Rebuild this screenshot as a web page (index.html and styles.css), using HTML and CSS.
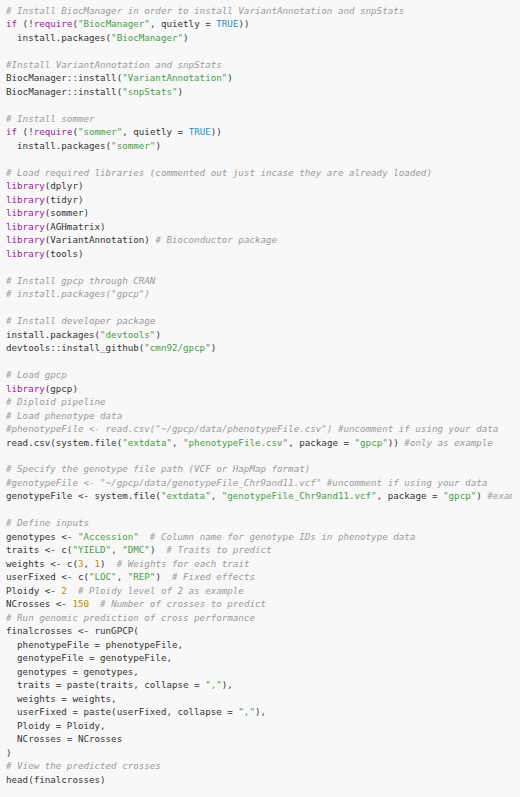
FILE: index.html
```html
<!DOCTYPE html>
<html>
<head>
<meta charset="utf-8">
<link rel="stylesheet" href="styles.css">
</head>
<body>
<pre class="code"><span class="c"># Install BiocManager in order to install VariantAnnotation and snpStats</span>
<span class="k">if</span> (!<span class="k">require</span>(<span class="s">"BiocManager"</span>, quietly = <span class="b">TRUE</span>))
  install.packages(<span class="s">"BiocManager"</span>)

<span class="c">#Install VariantAnnotation and snpStats</span>
BiocManager::install(<span class="s">"VariantAnnotation"</span>)
BiocManager::install(<span class="s">"snpStats"</span>)

<span class="c"># Install sommer</span>
<span class="k">if</span> (!<span class="k">require</span>(<span class="s">"sommer"</span>, quietly = <span class="b">TRUE</span>))
  install.packages(<span class="s">"sommer"</span>)

<span class="c"># Load required libraries (commented out just incase they are already loaded)</span>
<span class="k">library</span>(dplyr)
<span class="k">library</span>(tidyr)
<span class="k">library</span>(sommer)
<span class="k">library</span>(AGHmatrix)
<span class="k">library</span>(VariantAnnotation) <span class="c"># Bioconductor package</span>
<span class="k">library</span>(tools)

<span class="c"># Install gpcp through CRAN</span>
<span class="c"># install.packages("gpcp")</span>

<span class="c"># Install developer package</span>
install.packages(<span class="s">"devtools"</span>)
devtools::install_github(<span class="s">"cmn92/gpcp"</span>)

<span class="c"># Load gpcp</span>
<span class="k">library</span>(gpcp)
<span class="c"># Diploid pipeline</span>
<span class="c"># Load phenotype data</span>
<span class="c">#phenotypeFile &lt;- read.csv("~/gpcp/data/phenotypeFile.csv") #uncomment if using your data</span>
read.csv(system.file(<span class="s">"extdata"</span>, <span class="s">"phenotypeFile.csv"</span>, package = <span class="s">"gpcp"</span>)) <span class="c">#only as example</span>

<span class="c"># Specify the genotype file path (VCF or HapMap format)</span>
<span class="c">#genotypeFile &lt;- "~/gpcp/data/genotypeFile_Chr9and11.vcf" #uncomment if using your data</span>
genotypeFile &lt;- system.file(<span class="s">"extdata"</span>, <span class="s">"genotypeFile_Chr9and11.vcf"</span>, package = <span class="s">"gpcp"</span>) <span class="c">#example</span>

<span class="c"># Define inputs</span>
genotypes &lt;- <span class="s">"Accession"</span>  <span class="c"># Column name for genotype IDs in phenotype data</span>
traits &lt;- c(<span class="s">"YIELD"</span>, <span class="s">"DMC"</span>)  <span class="c"># Traits to predict</span>
weights &lt;- c(<span class="n">3</span>, <span class="n">1</span>)  <span class="c"># Weights for each trait</span>
userFixed &lt;- c(<span class="s">"LOC"</span>, <span class="s">"REP"</span>)  <span class="c"># Fixed effects</span>
Ploidy &lt;- <span class="n">2</span>  <span class="c"># Ploidy level of 2 as example</span>
NCrosses &lt;- <span class="n">150</span>  <span class="c"># Number of crosses to predict</span>
<span class="c"># Run genomic prediction of cross performance</span>
finalcrosses &lt;- runGPCP(
  phenotypeFile = phenotypeFile,
  genotypeFile = genotypeFile,
  genotypes = genotypes,
  traits = paste(traits, collapse = <span class="s">","</span>),
  weights = weights,
  userFixed = paste(userFixed, collapse = <span class="s">","</span>),
  Ploidy = Ploidy,
  NCrosses = NCrosses
)
<span class="c"># View the predicted crosses</span>
head(finalcrosses)</pre>
</body>
</html>
```

FILE: styles.css
```css
html, body {
  margin: 0;
  padding: 0;
  background: #f8f8f8;
  overflow: hidden;
}

.code {
  margin: 0;
  padding: 4px 0 0 6px;
  font-family: "DejaVu Sans Mono", monospace;
  font-size: 9.2px;
  line-height: 13.49px;
  color: #333333;
  white-space: pre;
  overflow: hidden;
  width: 506px;
}

.c {
  color: #9a9a9a;
  font-style: italic;
}

.k {
  color: #a0169c;
}

.s {
  color: #4a9b4a;
}

.b {
  color: #2d8fc4;
}

.n {
  color: #c08b00;
}
```
